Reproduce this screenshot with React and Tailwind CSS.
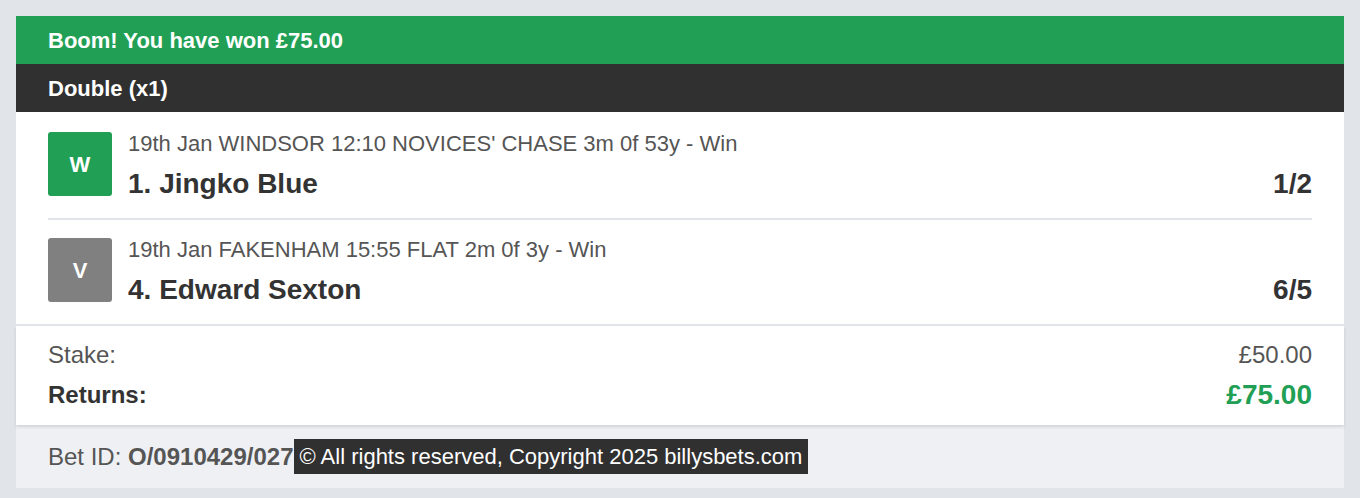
import React from 'react';

const selections = [
  {
    id: 1,
    result: 'W',
    badge: 'bg-[#21a055]',
    meta: "19th Jan WINDSOR 12:10 NOVICES' CHASE 3m 0f 53y - Win",
    name: '1. Jingko Blue',
    odds: '1/2',
  },
  {
    id: 2,
    result: 'V',
    badge: 'bg-[#808080]',
    meta: '19th Jan FAKENHAM 15:55 FLAT 2m 0f 3y - Win',
    name: '4. Edward Sexton',
    odds: '6/5',
  },
];

export default function App() {
  return (
    <div className="min-h-[498px] bg-[#e1e5ea] p-4 font-['Liberation_Sans',Arial,sans-serif]">
      <div className="bg-white">
        {/* Win banner */}
        <div className="flex h-12 items-center bg-[#21a055] px-8 text-[22px] font-bold text-white">
          Boom! You have won £75.00
        </div>
        <div className="flex h-12 items-center bg-[#303030] px-8 text-[22px] font-bold text-white">
          Double (x1)
        </div>

        {/* Selections */}
        <div className="border-b-2 border-[#e1e5ea] px-8">
          {selections.map((sel, i) => (
            <div
              key={sel.id}
              className={`flex gap-4 pb-5 ${i === 0 ? 'pt-5 border-b-2 border-[#e1e5ea]' : 'pt-[18px]'}`}
            >
              <div
                className={`flex h-16 w-16 shrink-0 items-center justify-center rounded-[3px] text-[22px] font-bold text-white ${sel.badge}`}
              >
                {sel.result}
              </div>
              <div className="flex-1">
                <p className="h-6 text-[22px] leading-[24px] text-[#555]">{sel.meta}</p>
                <div className="mt-[14px] flex h-7 items-center justify-between text-[28px] font-bold leading-[28px] text-[#333]">
                  <span>{sel.name}</span>
                  <span>{sel.odds}</span>
                </div>
              </div>
            </div>
          ))}
        </div>

        {/* Stake / returns */}
        <div className="relative px-8 pt-[15px] pb-4 shadow-[0_2px_3px_rgba(0,0,0,0.12)]">
          <div className="flex h-7 items-center justify-between text-2xl leading-7 text-[#555]">
            <span>Stake:</span>
            <span>£50.00</span>
          </div>
          <div className="mt-3 flex h-7 items-center justify-between">
            <span className="text-2xl leading-7 font-bold text-[#333]">Returns:</span>
            <span className="text-[28px] leading-7 font-bold text-[#21a055]">£75.00</span>
          </div>
        </div>

        {/* Footer */}
        <div className="flex h-[63px] items-center bg-[#eef0f4] px-8 text-2xl text-[#555]">
          <span>Bet ID:&nbsp;</span>
          <span className="font-bold">O/0910429/027</span>
          <span className="bg-[#303030] px-[6px] py-[5px] text-[22px] leading-[25px] text-white">
            © All rights reserved, Copyright 2025 billysbets.com
          </span>
        </div>
      </div>
    </div>
  );
}
